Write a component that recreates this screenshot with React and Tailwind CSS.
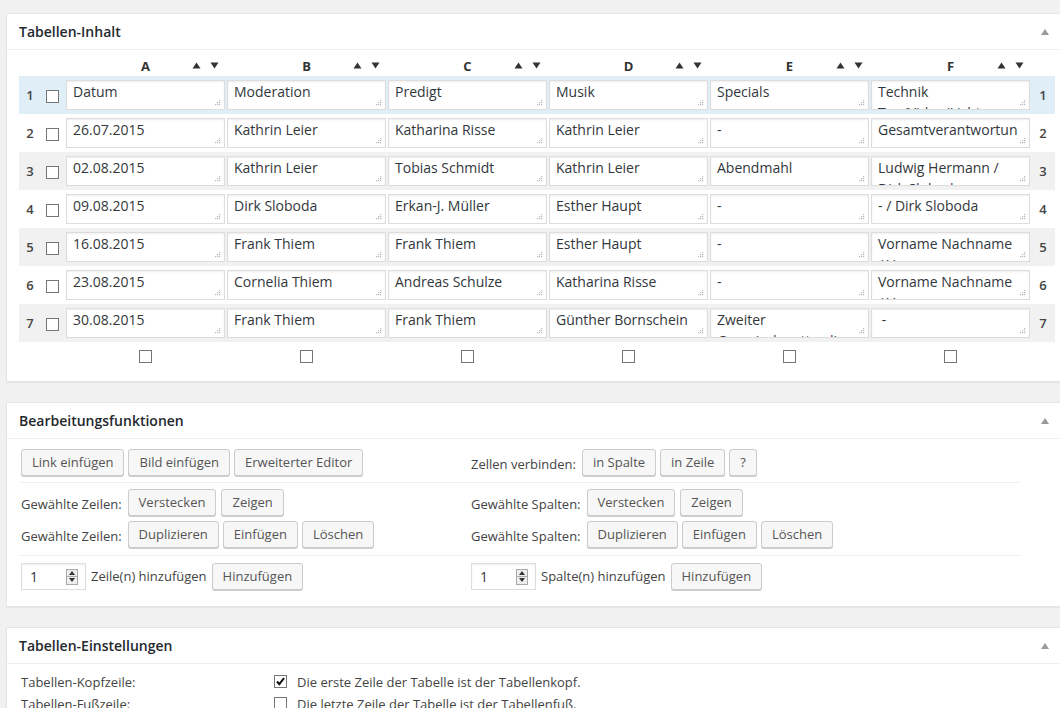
import React from "react";

const rows = [
  ["Datum", "Moderation", "Predigt", "Musik", "Specials", "Technik Ton/Video/Licht"],
  ["26.07.2015", "Kathrin Leier", "Katharina Risse", "Kathrin Leier", "-", "Gesamtverantwortung"],
  ["02.08.2015", "Kathrin Leier", "Tobias Schmidt", "Kathrin Leier", "Abendmahl", "Ludwig Hermann / Dirk Sloboda"],
  ["09.08.2015", "Dirk Sloboda", "Erkan-J. Müller", "Esther Haupt", "-", "- / Dirk Sloboda"],
  ["16.08.2015", "Frank Thiem", "Frank Thiem", "Esther Haupt", "-", "Vorname Nachname / Vorname Nachname"],
  ["23.08.2015", "Cornelia Thiem", "Andreas Schulze", "Katharina Risse", "-", "Vorname Nachname / Vorname Nachname"],
  ["30.08.2015", "Frank Thiem", "Frank Thiem", "Günther Bornschein", "Zweiter Gemeindegottesdienst", "\u00a0-"],
];

const letters = ["A", "B", "C", "D", "E", "F"];

function Checkbox({ checked }) {
  return (
    <div className="w-[13px] h-[13px] border border-[#767676] bg-white flex items-center justify-center">
      {checked && (
        <svg width="11" height="11" viewBox="0 0 11 11">
          <path d="M2 5.5 L4.3 8.2 L9 2.2" fill="none" stroke="#111" strokeWidth="2" />
        </svg>
      )}
    </div>
  );
}

function Grip() {
  return (
    <svg width="8" height="8" viewBox="0 0 8 8" className="absolute right-[3px] bottom-[3px]">
      <g fill="#b8b8b8">
        <rect x="6" y="2" width="1.2" height="1.2" />
        <rect x="4" y="4" width="1.2" height="1.2" />
        <rect x="6" y="4" width="1.2" height="1.2" />
        <rect x="2" y="6" width="1.2" height="1.2" />
        <rect x="4" y="6" width="1.2" height="1.2" />
        <rect x="6" y="6" width="1.2" height="1.2" />
      </g>
    </svg>
  );
}

function Cell({ text }) {
  return (
    <div className="relative h-[30px] bg-white border border-[#dddddd] shadow-[inset_0_1px_2px_rgba(0,0,0,0.07)] overflow-hidden">
      <div className="pl-[6px] pr-[10px] text-[14px] leading-[21px] text-[#32373c] break-words">{text}</div>
      <Grip />
    </div>
  );
}

function Up() {
  return (
    <svg width="9" height="7" viewBox="0 0 9 7">
      <path d="M0.5 6.5 L4.5 0.5 L8.5 6.5 Z" fill="#333" />
    </svg>
  );
}
function Down() {
  return (
    <svg width="9" height="7" viewBox="0 0 9 7">
      <path d="M0.5 0.5 L8.5 0.5 L4.5 6.5 Z" fill="#333" />
    </svg>
  );
}

function Panel({ title, children }) {
  return (
    <div className="w-[1070px] bg-white border border-[#e5e5e5] shadow-[0_1px_1px_rgba(0,0,0,0.04)]">
      <div className="h-[36px] border-b border-[#eeeeee] flex items-center justify-between pl-[12px] pr-[26px]">
        <span className="text-[14px] font-semibold text-[#23282d]">{title}</span>
        <svg width="8" height="6" viewBox="0 0 8 6">
          <path d="M0 6 L4 0 L8 6 Z" fill="#9a9a9a" />
        </svg>
      </div>
      {children}
    </div>
  );
}

function Btn({ children }) {
  return (
    <button className="h-[27px] px-[10px] border border-[#cccccc] bg-[#f7f7f7] rounded-[3px] text-[13px] text-[#555555] shadow-[0_1px_0_#cccccc] leading-[25px] whitespace-nowrap">
      {children}
    </button>
  );
}

function Spinner() {
  return (
    <div className="w-[65px] h-[27px] border border-[#dddddd] bg-white shadow-[inset_0_1px_2px_rgba(0,0,0,0.07)] flex items-center pl-[8px] pr-[7px] justify-between">
      <span className="text-[14px] text-[#32373c]">1</span>
      <div className="w-[12px] h-[16px] border border-[#a9a9a9] bg-[#eeeeee] flex flex-col">
        <div className="flex-1 flex items-center justify-center border-b border-[#a9a9a9]">
          <svg width="6" height="4" viewBox="0 0 6 4"><path d="M0 4 L3 0 L6 4 Z" fill="#333" /></svg>
        </div>
        <div className="flex-1 flex items-center justify-center">
          <svg width="6" height="4" viewBox="0 0 6 4"><path d="M0 0 L6 0 L3 4 Z" fill="#333" /></svg>
        </div>
      </div>
    </div>
  );
}

function Label({ children }) {
  return <span className="text-[13px] text-[#444444] whitespace-nowrap">{children}</span>;
}

export default function App() {
  const rowBg = (i) => (i === 0 ? "bg-[#e0eef7]" : i % 2 === 0 ? "bg-[#f1f1f1]" : "bg-white");
  return (
    <div className="w-[1060px] h-[708px] overflow-hidden bg-[#f1f1f1] font-['Open_Sans',sans-serif] pt-[13px] pl-[6px]">
      <div className="flex flex-col gap-[20px]">
        <Panel title="Tabellen-Inhalt">
          <div className="pl-[12px] pt-[7px] pb-[11px]">
            <div className="flex h-[19px] items-center">
              <div className="w-[46px]" />
              {letters.map((l) => (
                <div key={l} className="relative w-[161px] h-full flex items-center justify-center">
                  <span className="text-[13px] font-bold text-[#333]">{l}</span>
                  <div className="absolute right-[7px] top-[5px] flex gap-[9px]">
                    <Up />
                    <Down />
                  </div>
                </div>
              ))}
            </div>
            {rows.map((r, i) => (
              <div key={i} className={`flex h-[38px] w-[1036px] ${rowBg(i)}`}>
                <div className="w-[20px] flex items-center justify-center pl-[2px] pt-[2px] text-[13px] font-semibold text-[#444]">{i + 1}</div>
                <div className="w-[26px] flex items-center justify-center pt-[2px]">
                  <Checkbox />
                </div>
                {r.map((c, j) => (
                  <div key={j} className="w-[161px] px-[1px] py-[4px]">
                    <Cell text={c} />
                  </div>
                ))}
                <div className="w-[24px] flex items-center justify-center pt-[2px] text-[13px] font-semibold text-[#444]">{i + 1}</div>
              </div>
            ))}
            <div className="flex h-[28px] items-center">
              <div className="w-[46px]" />
              {letters.map((l) => (
                <div key={l} className="w-[161px] flex justify-center">
                  <Checkbox />
                </div>
              ))}
            </div>
          </div>
        </Panel>

        <Panel title="Bearbeitungsfunktionen">
          <div className="pl-[14px] pt-[10px] pb-[16px] w-[1014px]">
            <div className="flex">
              <div className="w-[450px] flex gap-[4px]">
                <Btn>Link einfügen</Btn>
                <Btn>Bild einfügen</Btn>
                <Btn>Erweiterter Editor</Btn>
              </div>
              <div className="flex items-center gap-[4px]">
                <span className="mr-[2px]"><Label>Zellen verbinden:</Label></span>
                <Btn>in Spalte</Btn>
                <Btn>in Zeile</Btn>
                <Btn>?</Btn>
              </div>
            </div>
            <div className="h-px bg-[#eeeeee] my-[6px] -ml-[1px] w-[1000px]" />
            <div className="flex flex-col gap-[5px]">
              <div className="flex">
                <div className="w-[450px] flex items-center gap-[5px]">
                  <span className="mr-[1px]"><Label>Gewählte Zeilen:</Label></span>
                  <Btn>Verstecken</Btn>
                  <Btn>Zeigen</Btn>
                </div>
                <div className="flex items-center gap-[5px]">
                  <span className="mr-[1px]"><Label>Gewählte Spalten:</Label></span>
                  <Btn>Verstecken</Btn>
                  <Btn>Zeigen</Btn>
                </div>
              </div>
              <div className="flex">
                <div className="w-[450px] flex items-center gap-[4px]">
                  <span className="mr-[2px]"><Label>Gewählte Zeilen:</Label></span>
                  <Btn>Duplizieren</Btn>
                  <Btn>Einfügen</Btn>
                  <Btn>Löschen</Btn>
                </div>
                <div className="flex items-center gap-[4px]">
                  <span className="mr-[2px]"><Label>Gewählte Spalten:</Label></span>
                  <Btn>Duplizieren</Btn>
                  <Btn>Einfügen</Btn>
                  <Btn>Löschen</Btn>
                </div>
              </div>
            </div>
            <div className="h-px bg-[#eeeeee] my-[7px] -ml-[1px] w-[1000px]" />
            <div className="flex">
              <div className="w-[450px] flex items-center gap-[5px]">
                <Spinner />
                <Label>Zeile(n) hinzufügen</Label>
                <Btn>Hinzufügen</Btn>
              </div>
              <div className="flex items-center gap-[5px]">
                <Spinner />
                <Label>Spalte(n) hinzufügen</Label>
                <Btn>Hinzufügen</Btn>
              </div>
            </div>
          </div>
        </Panel>

        <Panel title="Tabellen-Einstellungen">
          <div className="pl-[14px] pt-[6px]">
            <div className="flex h-[22px] items-center">
              <div className="w-[253px]"><Label>Tabellen-Kopfzeile:</Label></div>
              <Checkbox checked />
              <span className="ml-[10px]"><Label>Die erste Zeile der Tabelle ist der Tabellenkopf.</Label></span>
            </div>
            <div className="flex h-[22px] items-center">
              <div className="w-[253px]"><Label>Tabellen-Fußzeile:</Label></div>
              <Checkbox />
              <span className="ml-[10px]"><Label>Die letzte Zeile der Tabelle ist der Tabellenfuß.</Label></span>
            </div>
            <div className="h-[30px]" />
          </div>
        </Panel>
      </div>
    </div>
  );
}
